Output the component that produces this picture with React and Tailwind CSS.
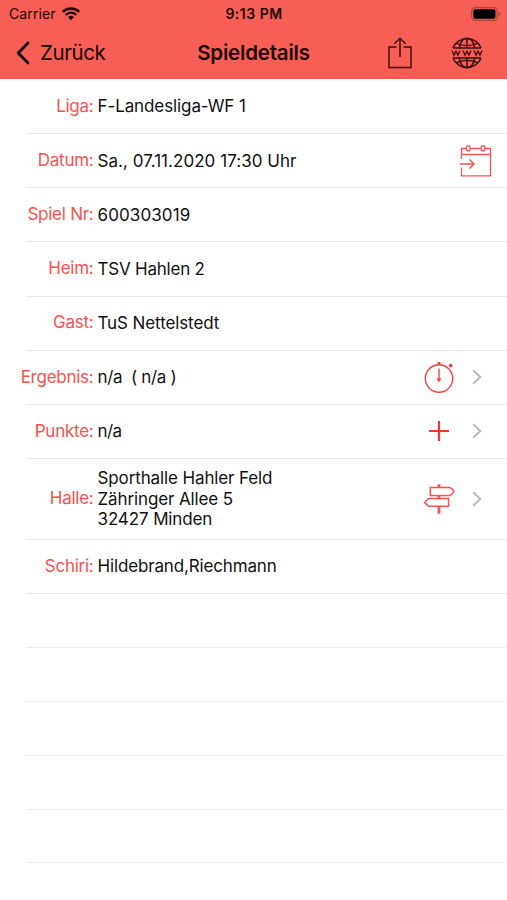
import React from 'react';

// --- Daten ---
const ROWS = [
  { label: 'Liga:', lines: ['F-Landesliga-WF 1'], tracking: 'tracking-[-0.1px]' },
  { label: 'Datum:', lines: ['Sa., 07.11.2020 17:30 Uhr'], icon: 'calendar', tracking: 'tracking-[0.04px]' },
  { label: 'Spiel Nr:', lines: ['600303019'], tracking: 'tracking-[0.1px]' },
  { label: 'Heim:', lines: ['TSV Hahlen 2'], tracking: 'tracking-[-0.22px]' },
  { label: 'Gast:', lines: ['TuS Nettelstedt'], tracking: 'tracking-[-0.1px]' },
  { label: 'Ergebnis:', lines: ['n/a  ( n/a )'], icon: 'stopwatch', more: true, tracking: 'tracking-[-0.35px]' },
  { label: 'Punkte:', lines: ['n/a'], icon: 'plus', more: true, tracking: 'tracking-[-0.6px]' },
  { label: 'Halle:', lines: ['Sporthalle Hahler Feld', 'Zähringer Allee 5', '32427 Minden'], icon: 'signpost', more: true, tall: true, tracking: 'tracking-[-0.12px]' },
  { label: 'Schiri:', lines: ['Hildebrand,Riechmann'], tracking: 'tracking-[-0.15px]' },
];

const EMPTY_ROWS = [1, 2, 3, 4, 5];

// --- Icons ---
const WifiIcon = () => (
  <svg width="18" height="14" viewBox="0 0 18 14" fill="none" stroke="#1b0605" strokeWidth="2.3">
    <path d="M0.8 4.9a11.6 11.6 0 0 1 16.4 0" />
    <path d="M3.7 7.9a7.5 7.5 0 0 1 10.6 0" />
    <path d="M9 13.2 6.1 10.3a4.1 4.1 0 0 1 5.8 0Z" fill="#1b0605" stroke="none" />
  </svg>
);

const BatteryIcon = () => (
  <svg width="30" height="14" viewBox="0 0 30 14" fill="none">
    <rect x="0.6" y="0.6" width="25.6" height="12.8" rx="3.6" stroke="#a8433d" strokeWidth="1.1" />
    <rect x="2.3" y="2.3" width="22.2" height="9.4" rx="2" fill="#000" />
    <path d="M27.6 4.8c1.1.4 1.8 1.2 1.8 2.2s-.7 1.8-1.8 2.2Z" fill="#a8433d" />
  </svg>
);

const BackIcon = () => (
  <svg width="14" height="24" viewBox="0 0 14 24" fill="none" stroke="#160403" strokeWidth="2.8" strokeLinecap="round" strokeLinejoin="round">
    <path d="M12 2 2.2 12 12 22" />
  </svg>
);

const ShareIcon = () => (
  <svg width="24" height="32" viewBox="0 0 24 32" fill="none" stroke="#3a100e" strokeWidth="1.5">
    <path d="M8.5 10H1v20.6h22V10h-7.5" />
    <path d="M12 20V1.6M6.4 6.8 12 1.3l5.6 5.5" />
  </svg>
);

const GlobeIcon = () => (
  <svg width="32" height="32" viewBox="0 0 32 32" fill="none" stroke="#3a100e" strokeWidth="1.5">
    <path d="M2 11a15 15 0 0 1 28 0M2 21a15 15 0 0 0 28 0" />
    <path d="M16 1v10M16 21v10M2 11h28M2 21h28" />
    <path d="M8.2 11C9.4 5 12.3 1.2 16 1.2S22.6 5 23.8 11M8.2 21c1.2 6 4.1 9.8 7.8 9.8s6.6-3.8 7.8-9.8" />
    <path d="M5 6c3 1.8 6.8 2.6 11 2.6S24 7.8 27 6M5 26c3-1.8 6.8-2.6 11-2.6s8 .8 11 2.6" strokeWidth="1.1" />
    <path d="M1 13.6l2 4.600 2-4 2 4 2-4.600M12 13.600l2 4.600 2-4 2 4 2-4.600M23 13.600l2 4.600 2-4 2 4 2-4.600" strokeWidth="1.3" />
  </svg>
);

const CalendarIcon = () => (
  <svg width="32" height="34" viewBox="0 0 32 34" fill="none" stroke="#fa5652" strokeWidth="1.3">
    <path d="M1.500 15V4.500h4.600M10.300 4.500h10.500M25 4.500h5.500v27.300h-29V23.500M1.500 10.500h29" />
    <ellipse cx="8.2" cy="4.3" rx="2" ry="2.7" />
    <ellipse cx="22.9" cy="4.3" rx="2" ry="2.7" />
    <path d="M0 20h14M9.500 15.500 14 20l-4.500 4.500" strokeWidth="1.5" />
  </svg>
);

const StopwatchIcon = () => (
  <svg width="30" height="32" viewBox="0 0 30 32" fill="none" stroke="#f8423f" strokeWidth="1.4">
    <circle cx="15" cy="17.5" r="13.7" />
    <path d="M15 7.500V21" />
    <path d="M15 1v3" strokeWidth="2.8" />
    <circle cx="15" cy="18.3" r="1.8" fill="#f8423f" stroke="none" />
    <circle cx="26.7" cy="4.6" r="1.9" fill="#f8423f" stroke="none" />
  </svg>
);

const PlusIcon = () => (
  <svg width="20" height="20" viewBox="0 0 20 20" fill="none" stroke="#f8322f" strokeWidth="2.2">
    <path d="M10 0v20M0 10h20" />
  </svg>
);

const SignpostIcon = () => (
  <svg width="32" height="32" viewBox="0 0 32 32" fill="none" stroke="#f95450" strokeWidth="1.5">
    <path d="M7.300 4.500h19.500q3 1.200 4 4-1 2.800-4 4H7.300Z" />
    <path d="M25.600 15.500H5.500L1.500 19.400l4 3.900h20.100Z" />
    <path d="M16 1.200v3.300M16 12.500v3M16 23.300v7.500" strokeWidth="2.8" />
  </svg>
);

const ChevronIcon = () => (
  <svg width="10" height="16" viewBox="0 0 10 16" fill="none" stroke="#bcbcbe" strokeWidth="2.2">
    <path d="M1.200 1.300 8.200 8l-7 6.700" />
  </svg>
);

const ICONS = {
  calendar: CalendarIcon,
  stopwatch: StopwatchIcon,
  plus: PlusIcon,
  signpost: SignpostIcon,
};

// --- Kopfzeile ---
const Header = () => (
  <header className="h-[79px] bg-[#f75e55] text-[#1b0605]">
    <div className="grid h-[27px] grid-cols-3 items-center pl-[9px] pr-1.5">
      <div className="flex items-center gap-1.5">
        <span className="text-[14px] tracking-[0.1px]">Carrier</span>
        <WifiIcon />
      </div>
      <span className="pr-0.5 text-center text-[14px] font-semibold tracking-[0.5px]">9:13 PM</span>
      <div className="flex justify-end">
        <BatteryIcon />
      </div>
    </div>
    <div className="grid h-[51px] grid-cols-3 items-center pl-4 pr-6">
      <button className="flex items-center gap-2.5 text-[20.500px] tracking-[-0.4px]">
        <BackIcon />
        <span className="pt-0.5">Zurück</span>
      </button>
      <h1 className="pl-2 pt-0.5 text-center text-[20.500px] font-semibold tracking-[-0.2px]">Spieldetails</h1>
      <div className="flex items-center justify-end gap-[39px]">
        <ShareIcon />
        <GlobeIcon />
      </div>
    </div>
  </header>
);

// --- Tabellenzeile ---
const DetailRow = ({ row }) => {
  const Icon = ICONS[row.icon];
  return (
    <li className={row.tall ? 'flex h-[81px] flex-col' : 'flex h-[54.150px] flex-col'}>
      <div className="flex flex-1 items-center">
        <span className="w-[93.500px] shrink-0 text-right text-[17px] tracking-[-0.25px] text-[#f9524e]">{row.label}</span>
        <div className={`ml-1 flex-1 whitespace-pre text-[17px] leading-[20.400px] text-[#111] ${row.tracking}`}>
          {row.lines.map((line) => (
            <p key={line}>{line}</p>
          ))}
        </div>
        {Icon && (
          <div className={row.more ? 'mr-[17px] flex w-8 justify-center' : 'mr-[15px] flex w-8 justify-center'}>
            <Icon />
          </div>
        )}
        {row.more && (
          <div className="mr-[25px]">
            <ChevronIcon />
          </div>
        )}
      </div>
      <div className="ml-[26px] h-px bg-[#e6e6e7]" />
    </li>
  );
};

const App = () => (
  <div className="min-h-[900px] w-full overflow-hidden bg-white font-['Inter',sans-serif]">
    <Header />
    <ul className="pt-px">
      {ROWS.map((row) => (
        <DetailRow key={row.label} row={row} />
      ))}
      {EMPTY_ROWS.map((n) => (
        <li key={n} className="ml-[26px] h-[53.850px] border-b border-[#ececed]" />
      ))}
    </ul>
  </div>
);

export default App;
